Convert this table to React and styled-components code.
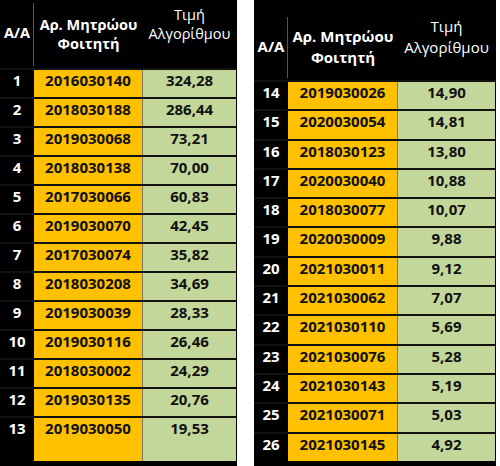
import React from "react";
import styled, { createGlobalStyle } from "styled-components";

const Global = createGlobalStyle`
  html, body { margin: 0; padding: 0; background: #ffffff; }
  body { font-family: "Open Sans", "Noto Sans", sans-serif; }
`;

const Page = styled.div`
  display: flex;
  align-items: flex-start;
  gap: 17px;
  width: 500px;
  height: 466px;
  overflow: hidden;
`;

const Table = styled.div`
  width: ${(p) => p.$width}px;
  background: #000;
  display: flex;
  flex-direction: column;
  padding-bottom: 5px;
  box-sizing: border-box;
  padding-right: 1px;
`;

const Header = styled.div`
  display: grid;
  grid-template-columns: ${(p) => p.$cols};
  height: ${(p) => p.$height}px;
  color: #fff;
  font-size: ${(p) => p.$fs}px;
  line-height: ${(p) => p.$lh}px;
  text-align: center;
`;

const HeadCell = styled.div`
  padding-top: ${(p) => p.$top}px;
  font-weight: ${(p) => (p.$bold ? 700 : 400)};
  white-space: nowrap;
`;

const HeadIndex = styled(HeadCell)`
  position: relative;
  &::after {
    content: "";
    position: absolute;
    right: 0;
    top: ${(p) => p.$lineTop}px;
    bottom: 2px;
    width: 1px;
    background: #555;
  }
`;

const Row = styled.div`
  display: grid;
  grid-template-columns: ${(p) => p.$cols};
  height: ${(p) => p.$height}px;
  border-top: 2px solid #111;
  box-sizing: border-box;
  font-size: 15px;
  line-height: 20px;
  font-weight: 700;
  text-align: center;
`;

const IndexCell = styled.div`
  color: #fff;
`;

const IdCell = styled.div`
  background: #ffc000;
  color: #111;
  border-right: 1px solid #7a7a6a;
`;

const ValueCell = styled.div`
  background: #c4d79b;
  color: #111;
`;

const left = [
  ["1", "2016030140", "324,28"],
  ["2", "2018030188", "286,44"],
  ["3", "2019030068", "73,21"],
  ["4", "2018030138", "70,00"],
  ["5", "2017030066", "60,83"],
  ["6", "2019030070", "42,45"],
  ["7", "2017030074", "35,82"],
  ["8", "2018030208", "34,69"],
  ["9", "2019030039", "28,33"],
  ["10", "2019030116", "26,46"],
  ["11", "2018030002", "24,29"],
  ["12", "2019030135", "20,76"],
  ["13", "2019030050", "19,53"],
];

const right = [
  ["14", "2019030026", "14,90"],
  ["15", "2020030054", "14,81"],
  ["16", "2018030123", "13,80"],
  ["17", "2020030040", "10,88"],
  ["18", "2018030077", "10,07"],
  ["19", "2020030009", "9,88"],
  ["20", "2021030011", "9,12"],
  ["21", "2021030062", "7,07"],
  ["22", "2021030110", "5,69"],
  ["23", "2021030076", "5,28"],
  ["24", "2021030143", "5,19"],
  ["25", "2021030071", "5,03"],
  ["26", "2021030145", "4,92"],
];

function DataTable({ width, cols, headH, fs, lh, tops, lineTop, rows, rowH }) {
  return (
    <Table $width={width}>
      <Header $cols={cols} $height={headH} $fs={fs} $lh={lh}>
        <HeadIndex $bold $top={tops[0]} $lineTop={lineTop}>A/A</HeadIndex>
        <HeadCell $bold $top={tops[1]}>
          Αρ. Μητρώου
          <br />
          Φοιτητή
        </HeadCell>
        <HeadCell $top={tops[2]}>
          Τιμή
          <br />
          Αλγορίθμου
        </HeadCell>
      </Header>
      {rows.map((r, i) => (
        <Row key={r[0]} $cols={cols} $height={rowH(i)}>
          <IndexCell>{r[0]}</IndexCell>
          <IdCell>{r[1]}</IdCell>
          <ValueCell>{r[2]}</ValueCell>
        </Row>
      ))}
    </Table>
  );
}

export default function App() {
  return (
    <>
      <Global />
      <Page>
        <DataTable
          width={237}
          cols="34px 109px 93px"
          headH={68}
          fs={14.5}
          lh={19}
          tops={[23, 15, 5]}
          lineTop={3}
          rows={left}
          rowH={(i) => (i === 12 ? 45 : 29)}
        />
        <DataTable
          width={242}
          cols="34px 110px 97px"
          headH={80}
          fs={15}
          lh={21}
          tops={[36, 26, 16]}
          lineTop={17}
          rows={right}
          rowH={() => 29.3}
        />
      </Page>
    </>
  );
}
